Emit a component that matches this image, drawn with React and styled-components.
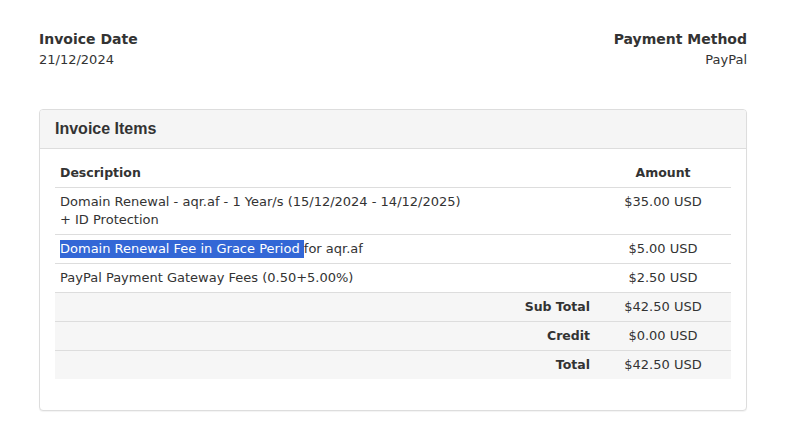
import React from 'react';
import styled, { createGlobalStyle } from 'styled-components';

const GlobalStyle = createGlobalStyle`
  html, body {
    margin: 0;
    padding: 0;
    background: #fff;
  }
  body {
    font-family: "DejaVu Sans", Verdana, sans-serif;
    font-size: 13px;
    color: #333;
  }
`;

const Page = styled.div`
  padding: 30px 43px 24px 39px;
`;

const InfoRow = styled.div`
  display: flex;
  justify-content: space-between;
  margin-bottom: 40px;
`;

const InfoBlock = styled.div`
  text-align: ${({ $align }) => $align || 'left'};
`;

const InfoLabel = styled.div`
  font-weight: bold;
  font-size: 14px;
  line-height: 18px;
  color: #333;
  margin-bottom: 3px;
`;

const InfoValue = styled.div`
  font-size: 13px;
  line-height: 18px;
  color: #333;
`;

const Panel = styled.div`
  border: 1px solid #ddd;
  border-radius: 4px;
  box-shadow: 0 1px 1px rgba(0, 0, 0, 0.05);
  background: #fff;
`;

const PanelHeading = styled.div`
  background: #f5f5f5;
  border-bottom: 1px solid #ddd;
  border-radius: 3px 3px 0 0;
  padding: 10px 15px;
`;

const PanelTitle = styled.h3`
  margin: 0;
  font-family: "Liberation Sans", Arial, sans-serif;
  font-size: 16px;
  font-weight: bold;
  line-height: 18px;
  color: #333;
`;

const PanelBody = styled.div`
  padding: 10px 15px 11px;
`;

const Table = styled.table`
  width: 100%;
  border-collapse: collapse;
  margin-bottom: 20px;
`;

const Cell = styled.td`
  padding: 5px;
  line-height: 18px;
  vertical-align: top;
  border-top: ${({ $first }) => ($first ? 'none' : '1px solid #ddd')};
  text-align: ${({ $align }) => $align || 'left'};
  font-weight: ${({ $bold }) => ($bold ? 'bold' : 'normal')};
  font-size: ${({ $bold }) => ($bold ? '12.5px' : '13px')};
  background: ${({ $shade }) => ($shade ? '#f6f6f6' : 'transparent')};
`;

const HeadCell = styled.th`
  padding: 5px;
  line-height: 18px;
  font-weight: bold;
  font-size: 12.5px;
  text-align: ${({ $align }) => $align || 'left'};
  border-bottom: 1px solid #ddd;
  width: ${({ $width }) => $width || 'auto'};
`;

const Selected = styled.span`
  display: inline-block;
  line-height: 18px;
  background: #3367d6;
  color: #fff;
  white-space: pre;
`;

const items = [
  {
    desc: (
      <>
        Domain Renewal - aqr.af - 1 Year/s (15/12/2024 - 14/12/2025)
        <br />+ ID Protection
      </>
    ),
    amount: '$35.00 USD',
  },
  {
    desc: (
      <>
        <Selected>Domain Renewal Fee in Grace Period </Selected>for aqr.af
      </>
    ),
    amount: '$5.00 USD',
  },
  { desc: 'PayPal Payment Gateway Fees (0.50+5.00%)', amount: '$2.50 USD' },
];

const totals = [
  { label: 'Sub Total', amount: '$42.50 USD' },
  { label: 'Credit', amount: '$0.00 USD' },
  { label: 'Total', amount: '$42.50 USD' },
];

export default function App() {
  return (
    <>
      <GlobalStyle />
      <Page>
        <InfoRow>
          <InfoBlock>
            <InfoLabel>Invoice Date</InfoLabel>
            <InfoValue>21/12/2024</InfoValue>
          </InfoBlock>
          <InfoBlock $align="right">
            <InfoLabel>Payment Method</InfoLabel>
            <InfoValue>PayPal</InfoValue>
          </InfoBlock>
        </InfoRow>

        <Panel>
          <PanelHeading>
            <PanelTitle>Invoice Items</PanelTitle>
          </PanelHeading>
          <PanelBody>
            <Table>
              <thead>
                <tr>
                  <HeadCell>Description</HeadCell>
                  <HeadCell $align="center" $width="126px">Amount</HeadCell>
                </tr>
              </thead>
              <tbody>
                {items.map((item, i) => (
                  <tr key={i}>
                    <Cell $first={i === 0}>{item.desc}</Cell>
                    <Cell $first={i === 0} $align="center">{item.amount}</Cell>
                  </tr>
                ))}
                {totals.map((t) => (
                  <tr key={t.label}>
                    <Cell $shade $bold $align="right">{t.label}</Cell>
                    <Cell $shade $align="center">{t.amount}</Cell>
                  </tr>
                ))}
              </tbody>
            </Table>
          </PanelBody>
        </Panel>
      </Page>
    </>
  );
}
